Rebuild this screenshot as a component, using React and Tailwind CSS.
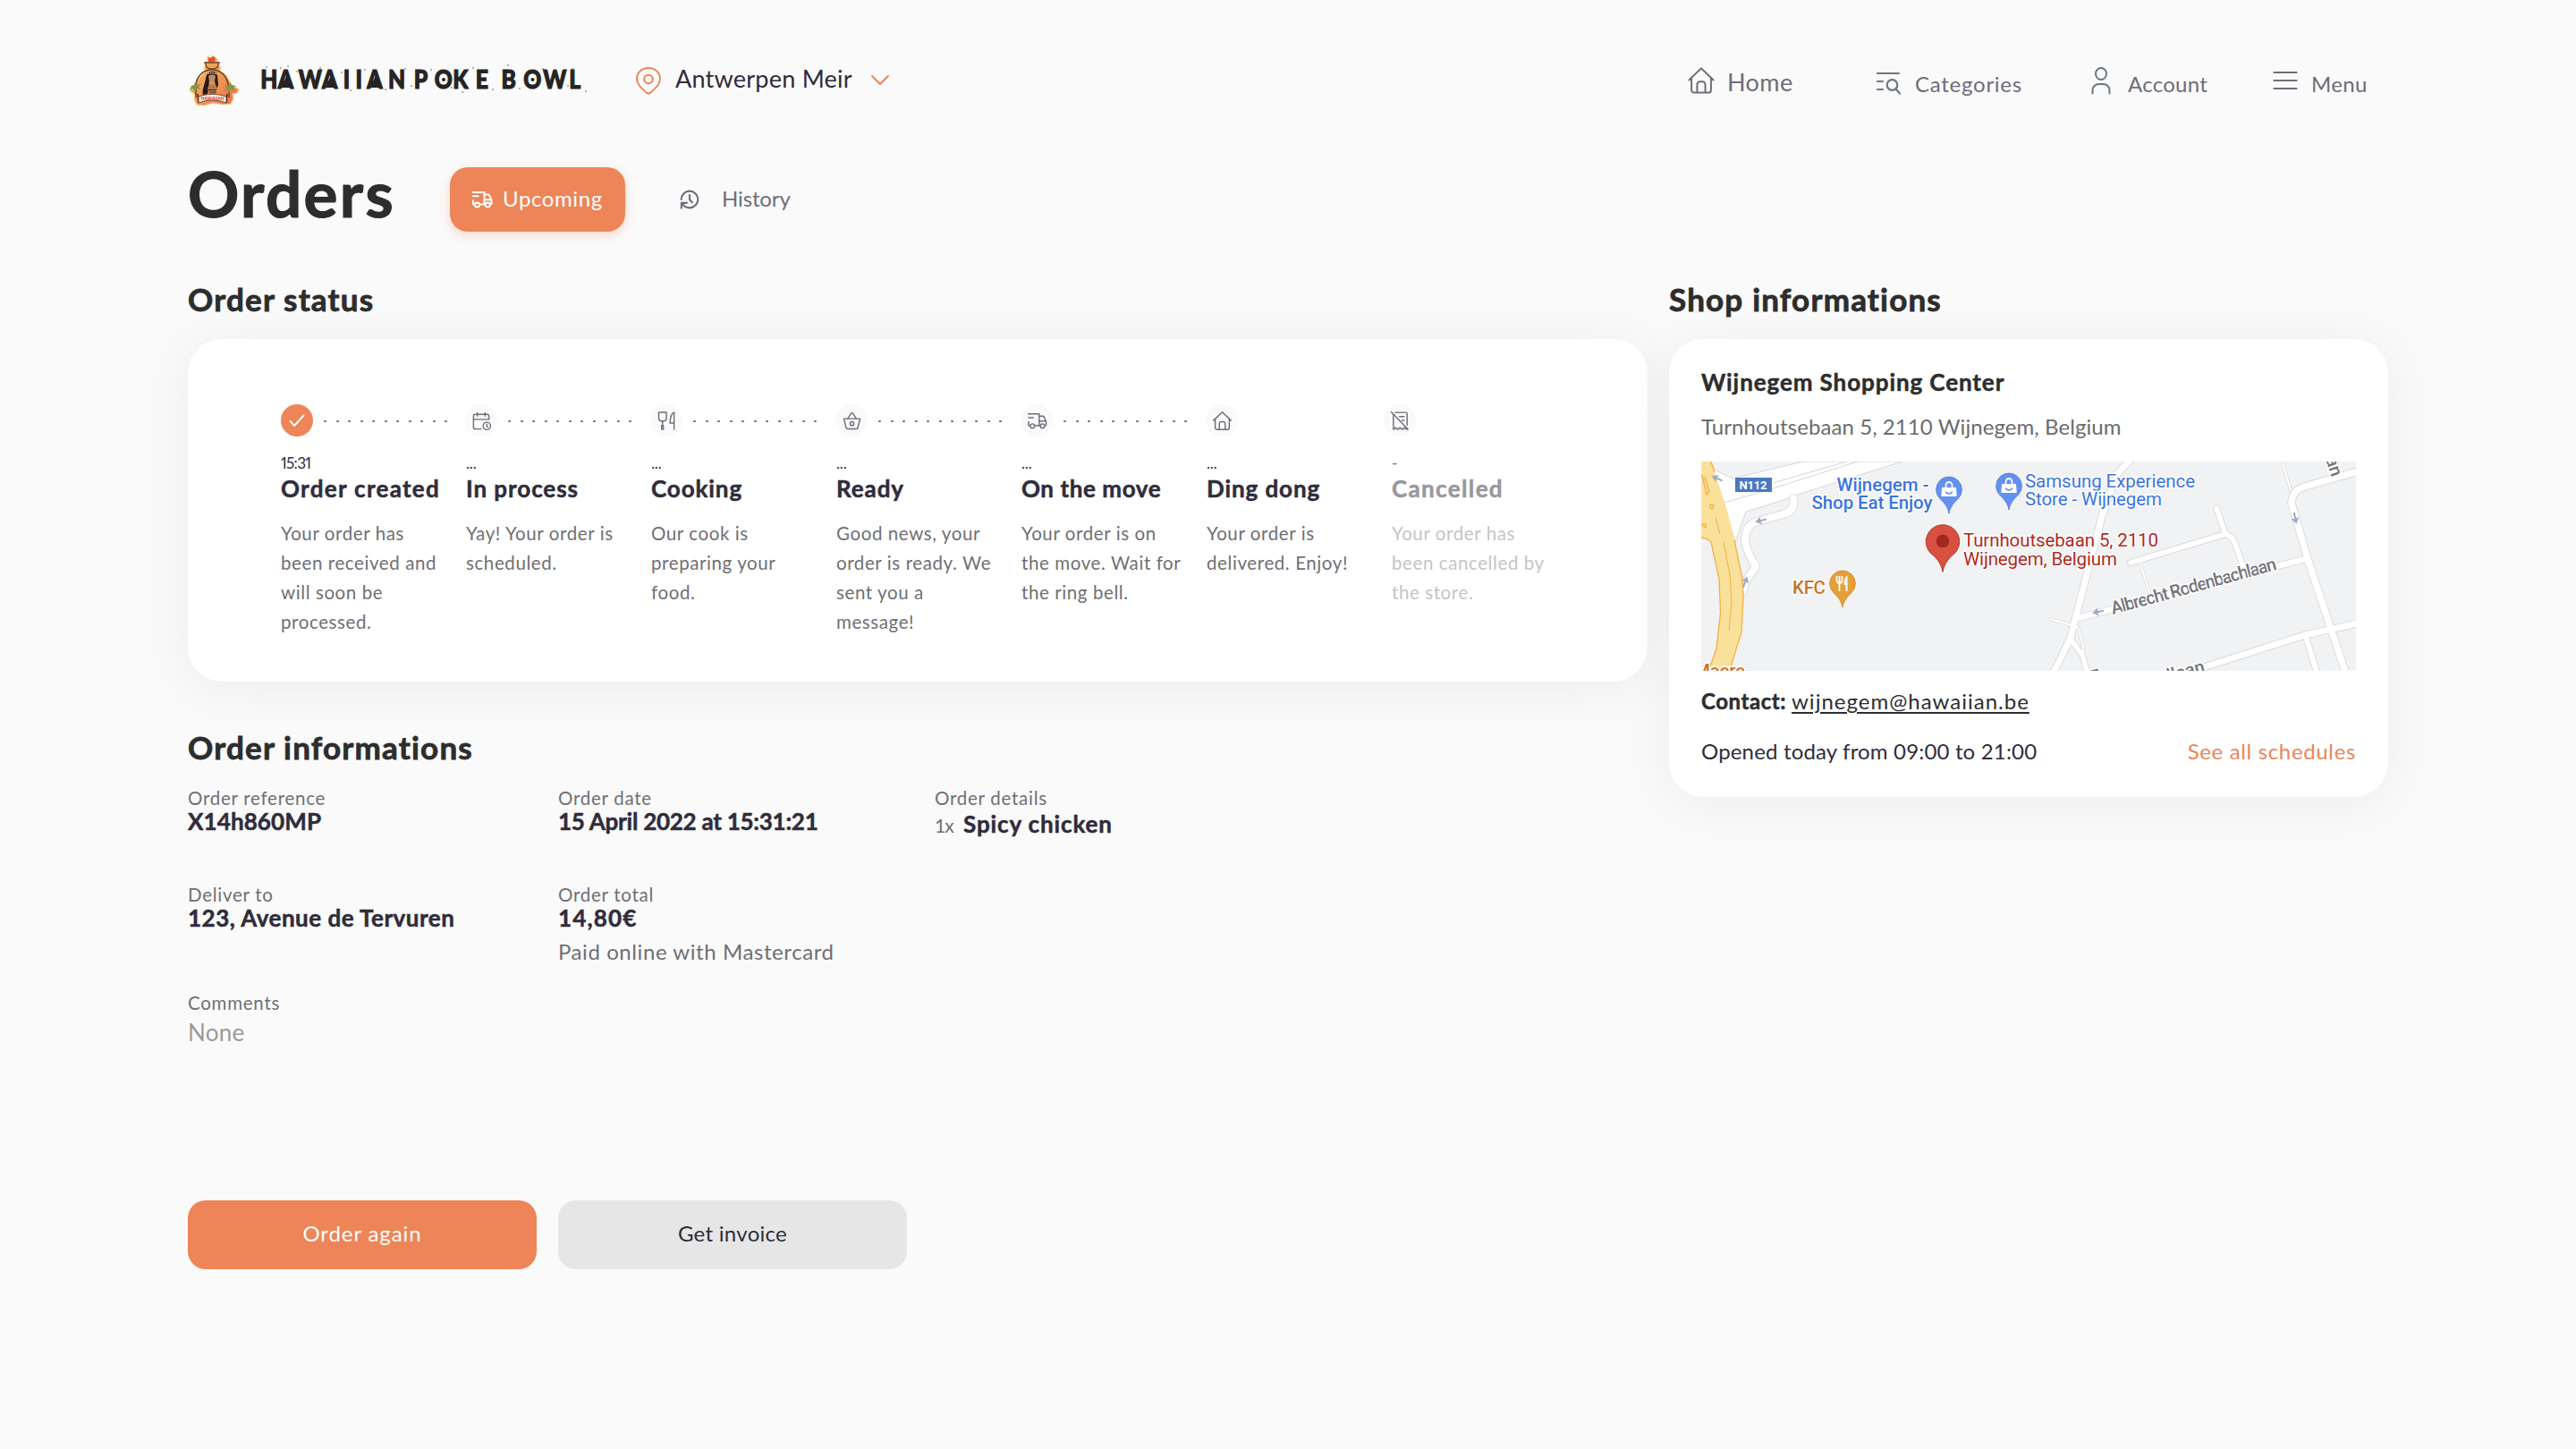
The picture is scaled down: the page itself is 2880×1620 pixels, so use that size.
const svgBase = {
  fill: 'none',
  stroke: 'currentColor',
  strokeLinecap: 'round',
  strokeLinejoin: 'round',
};

function Icon({ className, strokeWidth = 1.5, viewBox = '0 0 24 24', children }) {
  return (
    <svg {...svgBase} viewBox={viewBox} strokeWidth={strokeWidth} className={className}>
      {children}
    </svg>
  );
}

const homePaths = (
  <>
    <path d="M1.8 11.6 12 1.8l10.2 9.8" />
    <path d="M3.8 10v10a2.2 2.2 0 0 0 2.2 2.2h12a2.2 2.2 0 0 0 2.2-2.2V10" />
    <path d="M8.6 22v-6.8a2.2 2.2 0 0 1 2.2-2.2h2.4a2.2 2.2 0 0 1 2.2 2.2V22" />
  </>
);

const truckPaths = (
  <>
    <path d="M1.5 4h13v13.5H9.6" />
    <path d="M2 8.3h5.5" />
    <path d="M2 13v4.5h1.3" />
    <path d="M14.5 6.5h4.2c.7 0 1.2.4 1.5 1l2 4.6c.2.4.3.8.3 1.2v2.9c0 .8-.5 1.3-1.3 1.3" />
    <path d="M14.5 12.3h7.6" />
    <path d="M14.5 17.5h1.2" />
    <circle cx="6.5" cy="18" r="2.5" />
    <circle cx="18.3" cy="18" r="2.5" />
  </>
);

const stepIcons = {
  calendar: (
    <>
      <path d="M20.5 10V6.5a2 2 0 0 0-2-2h-14a2 2 0 0 0-2 2v13a2 2 0 0 0 2 2h7" />
      <path d="M7 2.5v4M16 2.5v4M2.5 10.3h18" />
      <circle cx="18" cy="18" r="4.3" />
      <path d="M18 15.8V18l1 1.3" />
    </>
  ),
  cutlery: (
    <>
      <path d="M2.5 2h9v7.5c0 1.8-1.4 2.7-3 2.7H5.7c-1.8 0-3-.9-3-2.7L2.5 2Z" />
      <path d="M7 12.3v5.2" />
      <path d="M6 17.5h2V22H6z" />
      <path d="M20.5 22V2c-3.2 1.700-4.7 6.500-4.7 12.700h4.700" />
    </>
  ),
  basket: (
    <>
      <path d="M2.5 9.5h19l-2.6 10.300a2 2 0 0 1-1.900 1.500H7a2 2 0 0 1-1.900-1.500L2.500 9.500Z" />
      <path d="m7.200 9.300 3.600-5.900c.6-.9 1.800-.9 2.400 0l3.600 5.900" />
      <circle cx="12" cy="15.300" r="2.200" />
    </>
  ),
  truck: truckPaths,
  home: homePaths,
  receipt: (
    <>
      <path d="M6 2.200h12.500a1.500 1.500 0 0 1 1.500 1.500V17" />
      <path d="M4 5v17l2.500-2 2.500 2 2.700-2 2.700 2 2.600-2 3 2" />
      <path d="M11 7h5.500M14 11.500h2.500" />
      <path d="M1.500 1.500 21 22" />
    </>
  ),
};

function Logo() {
  return (
    <svg viewBox="0 0 57 56" className="h-[56px] w-[57px]">
      <defs>
        <linearGradient id="sunset" x1="0" y1="0" x2="1" y2="1">
          <stop offset="0" stopColor="#f6c56c" />
          <stop offset=".5" stopColor="#f09a55" />
          <stop offset="1" stopColor="#ea6a4a" />
        </linearGradient>
      </defs>
      <path d="M22 1l3 2 3-3 3 3 2 1v5l4 5-2 3 8 6 5 8 2 3 7 4-2 4-5 1 1 5-3 6-8 1-12-2-10 3-8-1-3-6 1-5-6-5 3-5 4-2 4-7 7-7-2-4 4-5z" fill="url(#sunset)" stroke="#f8cf7c" strokeWidth="1.2" />
      <path d="M23 2l3 1 2-2 3 2-1 4h-7z" fill="#e8503c" />
      <path d="M19 8h16l-2 5-3 2h-6l-3-2z" fill="#eaa75b" stroke="#6d4223" strokeWidth="1.4" />
      <path d="M9 33c1-10 8-17 18-17s17 7 18 17" fill="none" stroke="#6d4223" strokeWidth="1.7" />
      <path d="M21 22c1-5 11-6 12 0l1 11 -1 3h-2l-1-8h-6l-1 10 -1 5-5 1c-1-5 0-7 1-10z" fill="#231a18" />
      <path d="M23 23c2-2 6-2 8 0l-1 6-3 2-3-2z" fill="#c08a63" />
      <path d="M20 21c4-2 9-2 13 0" stroke="#f0a8a0" strokeWidth="2" strokeDasharray="1.5 1" fill="none" />
      <path d="M24 32h7l2 5-2 6h-7l-2-6z" fill="#b9794c" />
      <path d="M23 38.500h9M24 41h8" stroke="#4b2a1a" strokeWidth="1.2" />
      <path d="M9 36v11M46 36v11" stroke="#7a4a26" strokeWidth="1.600" />
      <path d="M2 35l5-2 1-3 2 3 5-1-3 3 3 3-5-1-2 4-2-4-4 1 2-3zM41 33l5 0 1-3 2 3 5 1-3 2 1 3-4-1-2 4-2-4-4 1 3-3z" fill="#82964a" />
      <path d="M11 43l1 9c9-4 22-4 31 0l1-9" fill="none" stroke="#5b3620" strokeWidth="1.800" />
      <path d="M12 46c10-3.500 21-3.500 31 0v7c-10-4-21-4-31 0z" fill="#fbeee6" stroke="#5b3620" strokeWidth=".8" />
      <text x="27.500" y="50" textAnchor="middle" fontSize="5" fontWeight="900" fill="#d8404a" textLength="26" className="font-['Lato',sans-serif]">HAWAIIAN</text>
    </svg>
  );
}

function Wordmark() {
  return (
    <svg viewBox="0 0 364 32" className="h-[32px] w-[364px] overflow-visible">
      <text
        transform="scale(.85 1)"
        y="27"
        x="-1 22 49 80 108 124 139 167 196 201 228 252 282 300 316 345 371 405"
        fontSize="29"
        fontWeight="900"
        fill="#262422"
        stroke="#262422"
        strokeWidth="1.2"
        className="font-['Lato',sans-serif]"
      >
        HAWAIIAN POKE BOWL
      </text>
      {/* solid wedges inside each A */}
      <path d="M28.5 12l6 14h-12zM78 12l6 14h-12zM128 12l6 14h-12z" fill="#262422" />
      <circle cx="204" cy="17" r="2" fill="#262422" />
      <circle cx="303.500" cy="17" r="2" fill="#262422" />
      {/* ink speckles around the letters */}
      <g fill="#55524e">
        {[[6, 3], [22, 4], [30, 2], [40, 8], [66, 4], [90, 9], [100, 29], [116, 6], [139, 28], [161, 5], [168, 24], [190, 6], [213, 26], [225, 31], [237, 4], [259, 28], [276, 1], [289, 27], [315, 5], [343, 24], [348, 5], [363, 30]].map(([x, y]) => (
          <circle key={`${x}-${y}`} cx={x} cy={y} r=".8" />
        ))}
      </g>
    </svg>
  );
}

function Header() {
  return (
    <header className="flex h-[176px] items-center justify-between">
      <div className="flex items-center">
        <div className="mt-1"><Logo /></div>
        <div className="ml-[25px]"><Wordmark /></div>
        <Icon className="ml-[54px] mt-1 h-[32px] w-[30px] text-[#ec8457]" strokeWidth={2} viewBox="0 0 30 32">
          <path d="M15 30.500c-1 0-1.700-.4-2.400-1C7 24.500 2 20.200 2 14 2 7 7.800 2 15 2s13 5 13 12c0 6.200-5 10.500-10.600 15.500-.7.6-1.400 1-2.400 1Z" />
          <circle cx="15" cy="14.500" r="4.800" />
        </Icon>
        <span className="ml-[15px] text-[27px] leading-[40px] tracking-[0.009em] text-[#2f2c3b]">Antwerpen Meir</span>
        <Icon className="ml-[20px] mt-1 h-[14px] w-[22px] text-[#ec8457]" strokeWidth={2} viewBox="0 0 22 14">
          <path d="m2 2 9 9 9-9" />
        </Icon>
      </div>
      <nav className="flex items-center text-[24px] leading-[30px] text-[#6e6d78]">
        <a className="flex w-[210px] items-center">
          <Icon className="-ml-px mt-1 h-[32px] w-[32px]">{homePaths}</Icon>
          <span className="ml-[13px] mt-[7px] text-[27px] tracking-[0.015em]">Home</span>
        </a>
        <a className="flex w-[242px] items-center">
          <Icon className="mt-[9px] h-[28px] w-[30px] text-[#6a7885]" strokeWidth={2.2} viewBox="0 0 30 28">
            <path d="M2 3h24M2 12h6M2 21h6" />
            <circle cx="18.5" cy="16" r="5.8" />
            <path d="m23 21 4 4.500" />
          </Icon>
          <span className="ml-[14px] mt-[11px] tracking-[0.031em]">Categories</span>
        </a>
        <a className="flex w-[202px] items-center">
          <Icon className="-ml-px mt-1 h-[32px] w-[22px] text-[#6a7885]" strokeWidth={2} viewBox="0 0 22 32">
            <ellipse cx="11" cy="8.500" rx="6" ry="6.500" />
            <path d="M1.500 30.500V27a7 7 0 0 1 7-7h5a7 7 0 0 1 7 7v3.500" />
          </Icon>
          <span className="ml-[19px] mt-[11px] tracking-[0.011em]">Account</span>
        </a>
        <a className="flex w-[129px] items-center">
          <Icon className="mt-1 h-[24px] w-[28px]" strokeWidth={2.2} viewBox="0 0 28 24">
            <path d="M1.500 3h25M1.500 12h25M1.500 21h25" />
          </Icon>
          <span className="ml-[15px] mt-[11px] tracking-[0.015em]">Menu</span>
        </a>
      </nav>
    </header>
  );
}

function TitleBar() {
  return (
    <div className="mt-[11px] flex h-[72px] items-center">
      <h1 className="-mt-[15px] w-[293px] text-[71px] font-bold leading-[72px] tracking-[0.033em] text-[#2d2d2d] [-webkit-text-stroke:1.2px_#2d2d2d]">Orders</h1>
      <button className="flex h-[72px] w-[196px] items-center rounded-[20px] bg-[#ed8558] pl-[24px] text-white shadow-[0_4px_12px_rgba(237,133,88,0.3)]">
        <Icon className="h-[24px] w-[24px]" strokeWidth={2}>{truckPaths}</Icon>
        <span className="-mt-[3px] ml-[11px] text-[24px] tracking-[0.025em]">Upcoming</span>
      </button>
      <button className="ml-[61px] flex h-[72px] items-center text-[#6e6d78]">
        <Icon className="h-[22px] w-[22px]" strokeWidth={2.3}>
          <path d="M1.800 12A10.200 10.200 0 1 1 12 22.200c-3.700 0-7-1.800-8.800-5" />
          <path d="M8.600 16.200H2v6.300" />
          <path d="M12 6.500V12l3 3.500" />
        </Icon>
        <span className="-mt-[3px] ml-[25px] text-[24px] tracking-[-0.005em]">History</span>
      </button>
    </div>
  );
}

function Heading({ children }) {
  return <h2 className="text-[35px] font-bold leading-[42px] tracking-[0.034em] text-[#2d2d2d] [-webkit-text-stroke:0.8px_#2d2d2d]">{children}</h2>;
}

const steps = [
  { icon: 'check', time: '15:31', title: 'Order created', tracking: 'tracking-[0.05em]', body: 'Your order has\nbeen received and\nwill soon be\nprocessed.' },
  { icon: 'calendar', time: '...', title: 'In process', tracking: 'tracking-[0.036em]', body: 'Yay! Your order is\nscheduled.' },
  { icon: 'cutlery', time: '...', title: 'Cooking', tracking: 'tracking-[0.035em]', body: 'Our cook is\npreparing your\nfood.' },
  { icon: 'basket', time: '...', title: 'Ready', tracking: 'tracking-[0.035em]', body: 'Good news, your\norder is ready. We\nsent you a\nmessage!' },
  { icon: 'truck', time: '...', title: 'On the move', tracking: 'tracking-[0.022em]', body: 'Your order is on\nthe move. Wait for\nthe ring bell.' },
  { icon: 'home', time: '...', title: 'Ding dong', tracking: 'tracking-[0.035em]', body: 'Your order is\ndelivered. Enjoy!' },
  { icon: 'receipt', time: '-', title: 'Cancelled', tracking: 'tracking-[0.052em]', body: 'Your order has\nbeen cancelled by\nthe store.', muted: true },
];

function Step({ step, dotted }) {
  const { icon, time, title, tracking, body, muted } = step;
  return (
    <div className="w-[207px] shrink-0">
      <div className="flex h-[36px] items-center">
        {icon === 'check' ? (
          <div className="flex h-[36px] w-[36px] items-center justify-center rounded-full bg-[#ed8558] text-white">
            <Icon className="h-[20px] w-[20px]" strokeWidth={2.5}>
              <path d="m3 13 5.500 6L21 5.500" />
            </Icon>
          </div>
        ) : (
          <div className={`-ml-px flex h-[36px] w-[36px] items-center justify-center rounded-full bg-[#fafafa] text-[#6e6d78] ${muted ? 'relative -left-[8px]' : ''}`}>
            <Icon className="h-[23px] w-[23px]">{stepIcons[icon]}</Icon>
          </div>
        )}
        {dotted && (
          <div className="ml-[12px] mt-[2px] flex w-[138px] justify-between">
            {Array.from({ length: 11 }, (_, i) => (
              <span key={i} className="h-[2px] w-[3px] rounded-[1px] bg-[#6e6d78]" />
            ))}
          </div>
        )}
      </div>
      <div className={`mt-[18px] text-[17px] leading-[24px] proportional-nums ${icon === 'check' ? 'tracking-[-0.04em]' : 'tracking-[-0.01em]'} ${muted ? 'text-[#6e6d78]' : 'text-[#2f2c3b]'}`}>{time}</div>
      <div className={`text-[26px] font-bold leading-[32px] ${tracking} ${muted ? 'text-[#98979e] [-webkit-text-stroke:0.5px_#98979e]' : 'text-[#2f2c3b] [-webkit-text-stroke:0.5px_#2f2c3b]'}`}>{title}</div>
      <p className={`mt-[18px] whitespace-pre text-[20.5px] leading-[33px] tracking-[0.029em] ${muted ? 'text-[#c5c5c5]' : 'text-[#6f6f74]'}`}>{body}</p>
    </div>
  );
}

function Field({ label, children, className = '' }) {
  return (
    <div className={className}>
      <div className="text-[20.5px] leading-[22px] tracking-[0.036em] text-[#6f6f74]">{label}</div>
      {children}
    </div>
  );
}

function Value({ children, className = '' }) {
  return <div className={`text-[26px] font-bold leading-[30px] text-[#2f2c3b] [-webkit-text-stroke:0.5px_#2f2c3b] ${className}`}>{children}</div>;
}

function OrderInformations() {
  return (
    <section className="mt-[52px]">
      <Heading>Order informations</Heading>
      <div className="mt-[25px] grid grid-cols-[414px_421px_auto] grid-rows-[108px_121px_232px]">
        <Field label="Order reference"><Value className="tracking-[0.004em]">X14h860MP</Value></Field>
        <Field label="Order date"><Value className="tracking-[-0.01em]">15 April 2022 at 15:31:21</Value></Field>
        <Field label="Order details">
          <div className="mt-[3px] flex items-baseline">
            <span className="w-[32px] text-[21px] leading-[30px] tracking-[-0.04em] text-[#6f6f74]">1x</span>
            <Value className="tracking-[0.034em]">Spicy chicken</Value>
          </div>
        </Field>
        <Field label="Deliver to"><Value className="tracking-[0.019em]">123, Avenue de Tervuren</Value></Field>
        <Field label="Order total" className="col-span-2">
          <Value className="tracking-[0.045em]">14,80€</Value>
          <div className="mt-[8px] text-[24px] leading-[30px] tracking-[0.024em] text-[#6f6f74]">Paid online with Mastercard</div>
        </Field>
        <Field label="Comments">
          <div className="mt-[7px] text-[26px] leading-[30px] tracking-[0.01em] text-[#9a9a9a]">None</div>
        </Field>
      </div>
      <div className="flex gap-[24px] text-[24px]">
        <button className="h-[77px] w-[390px] rounded-[20px] bg-[#ed8558] pb-[3px] tracking-[0.037em] text-white">Order again</button>
        <button className="h-[77px] w-[390px] rounded-[20px] bg-[#e6e6e6] pb-[3px] tracking-[0.012em] text-[#2f2c3b]">Get invoice</button>
      </div>
    </section>
  );
}

const roads = [
  ['M480-2 465 14 448 61 418 177 413 197 393 238', 7],
  ['M480 113 586 81', 6],
  ['M576 52 586 81 Q593 83 597 92 L606 118', 5.5],
  ['M421 175 675 109', 6.5],
  ['M734 11 675 28 Q660 32 660 47 L678 109 703 184 721 238', 7.5],
  ['M734 181 675 194 565 229 520 243', 7],
  ['M676 196 689 238', 6],
  ['M413 199 426 216 432 238', 5.5],
  ['M103 41 Q106 55 91 59 L66 66 Q49 70 49 87 Q49 98 61 117 L50 134 46 146', 8],
];

const thinRoads = ['M491 114 501 147', 'M649 0 659 32', 'M390 176 421 185 427 206 427 216'];

function Arrow({ x, y, angle }) {
  return (
    <g transform={`translate(${x} ${y}) rotate(${angle})`} stroke="#a6a9c4" fill="#a6a9c4">
      <path d="M-4 0H6" strokeWidth="2.2" />
      <path d="M-7 0l7-4.500-1 4.500 1 4.500z" stroke="none" />
    </g>
  );
}

function Pin({ x, y, r, tail, fill, edge, children }) {
  return (
    <g transform={`translate(${x} ${y})`}>
      <path
        d={`M0 ${tail}C-1 ${tail - 6} -4 ${r + 2} ${-r * 0.72} ${r * 0.72}A${r} ${r} 0 1 1 ${r * 0.72} ${r * 0.72}C4 ${r + 2} 1 ${tail - 6} 0 ${tail}Z`}
        fill={fill}
        stroke={edge}
        strokeWidth="1"
      />
      {children}
    </g>
  );
}

const bag = (
  <>
    <path d="M-8-2h16l.7 10h-17.400z" fill="#fff" />
    <path d="M-3.500-2v-2.500a3.500 3.500 0 0 1 7 0V-2" fill="none" stroke="#fff" strokeWidth="1.8" />
    <path d="M-3.700 2.500a4 4 0 0 0 7.400 0" fill="none" stroke="#5b8def" strokeWidth="1.5" />
  </>
);

function MapView() {
  return (
    <svg viewBox="0 0 732 234" className="mt-[23px] h-[234px] w-[732px] font-['Roboto',sans-serif]">
      <rect width="732" height="234" fill="#f1f2f3" />
      <path d="M12 8 35 19 114 0H225L101 39 92 43 50 56 38 90 26 48Z" fill="#fff" stroke="#d8d8da" strokeWidth="1" />
      <path d="M26 46 80 30 175 0M80 24 163 0" stroke="#d4d4d6" strokeWidth="1" fill="none" />
      <g fill="none" strokeLinecap="round" strokeLinejoin="round">
        {thinRoads.map((d) => <path key={d} d={d} stroke="#dcdcdc" strokeWidth="3.5" />)}
        {roads.map(([d, w]) => <path key={d} d={d} stroke="#d9d9db" strokeWidth={w + 1.8} />)}
        {thinRoads.map((d) => <path key={d} d={d} stroke="#fff" strokeWidth="2" />)}
        {roads.map(([d, w]) => <path key={d} d={d} stroke="#fff" strokeWidth={w} />)}
      </g>
      <path d="M0 0H11L28 51 38 91 46 131 47 151 45 191 33 229 32 236H8L10 229 17 209 21.500 169 20 131 11 90 0 85Z" fill="#fae19b" />
      <g fill="none" stroke="#f0b045" strokeWidth="1.3">
        <path d="M11 0 15 12M37 88 46 131 47 151 45 191 33 229M10 229 17 209 21.500 169 20 131 11 90 6 86 0 85" />
        <path d="M16 63 21 81M25 90 32 127 34 157 31 189" strokeWidth="1" />
        <path d="M1 15 6 37 9 34 4 17M10 48l4 1-1 4-3-1zM0 70l5 0 0 4-4-2" />
      </g>
      <Arrow x={18} y={19} angle={25} />
      <Arrow x={67} y={66} angle={-15} />
      <Arrow x={49} y={135} angle={110} />
      <Arrow x={444} y={168} angle={-12} />
      <Arrow x={664} y={63} angle={258} />
      <rect x="38" y="18" width="41" height="16" fill="#4a78c0" />
      <text x="42.5" y="31" fontSize="13" fontWeight="700" fill="#fff" textLength="31">N112</text>

      <g fontSize="20.5" fontWeight="500" stroke="#fff" strokeWidth="3" paintOrder="stroke" strokeLinejoin="round">
        <g fill="#3b74df">
          <text x="151.5" y="33" textLength="103">Wijnegem -</text>
          <text x="123.5" y="53" textLength="135">Shop Eat Enjoy</text>
          <g fontWeight="400">
            <text x="362" y="29" textLength="190">Samsung Experience</text>
            <text x="362" y="49" textLength="153">Store - Wijnegem</text>
          </g>
        </g>
        <g fill="#ad2a22" fontWeight="400">
          <text x="293" y="95" textLength="218">Turnhoutsebaan 5, 2110</text>
          <text x="293" y="115.5" textLength="172">Wijnegem, Belgium</text>
        </g>
        <text x="102" y="147.5" textLength="37" fill="#c9732c">KFC</text>
        <text x="-8" y="241" textLength="57" fill="#c9732c">Maere</text>
        <g fill="#75757a" fontSize="20">
          <text transform="translate(460 171) rotate(-15.3)" textLength="191">Albrecht Rodenbachlaan</text>
          <text transform="translate(564 235) rotate(-15)" textAnchor="end">llaan</text>
          <text transform="translate(698 -3) rotate(72)">an</text>
          <text transform="translate(433 233) rotate(75)">n</text>
        </g>
      </g>

      <Pin x={277} y={31} r={14.3} tail={27} fill="#6391f0" edge="#5583e0">{bag}</Pin>
      <Pin x={344} y={27} r={14.3} tail={27} fill="#6391f0" edge="#5583e0">{bag}</Pin>
      <Pin x={270} y={89} r={18.7} tail={34.5} fill="#d85040" edge="#b93a2e">
        <circle r="7.3" fill="#9f2820" />
      </Pin>
      <Pin x={158} y={136} r={14.3} tail={27} fill="#e5a03a" edge="#d58d2a">
        <path d="M-6.500-8v5a3 3 0 0 0 6 0v-5M-3.500-8V9" fill="none" stroke="#fff" strokeWidth="1.8" />
        <path d="M5.500-8.500V9h-2V2H1.500c0-5 1-9 4-10.500z" fill="#fff" />
      </Pin>
    </svg>
  );
}

function ShopInformations() {
  return (
    <section>
      <Heading>Shop informations</Heading>
      <div className="mt-[24px] h-[512px] rounded-[38px] bg-white px-[36px] pt-[32px] text-[24px] leading-[32px] shadow-[0_6px_60px_rgba(0,0,0,0.06)]">
        <div className="text-[26px] font-bold tracking-[0.035em] text-[#2d2d2d] [-webkit-text-stroke:0.5px_#2d2d2d]">Wijnegem Shopping Center</div>
        <div className="mt-[18px] tracking-[0.003em] text-[#6b6b6b]">Turnhoutsebaan 5, 2110 Wijnegem, Belgium</div>
        <MapView />
        <div className="mt-[18px] flex text-[#2d2d2d]">
          <b className="w-[101px] tracking-[0.023em] [-webkit-text-stroke:0.5px_#2d2d2d]">Contact:</b>
          <a className="tracking-[0.042em] underline decoration-[1.5px] underline-offset-[3px]">wijnegem@hawaiian.be</a>
        </div>
        <div className="mt-[24px] flex justify-between">
          <span className="tracking-[0.007em] text-[#2f2c3b]">Opened today from 09:00 to 21:00</span>
          <a className="tracking-[0.027em] text-[#ed8558]">See all schedules</a>
        </div>
      </div>
    </section>
  );
}

export default function App() {
  return (
    <div className="h-[1620px] w-[2880px] overflow-hidden bg-[#fafafa] px-[210px] font-['Lato',sans-serif] [font-variant-ligatures:none]">
      <Header />
      <TitleBar />
      <main className="mt-[54px] grid grid-cols-[1632px_804px] gap-[24px]">
        <div>
          <Heading>Order status</Heading>
          <div className="mt-[24px] flex h-[383px] rounded-[38px] bg-white pl-[104px] pt-[73px] shadow-[0_6px_60px_rgba(0,0,0,0.06)]">
            {steps.map((step, i) => (
              <Step key={step.title} step={step} dotted={i < 5} />
            ))}
          </div>
          <OrderInformations />
        </div>
        <ShopInformations />
      </main>
    </div>
  );
}
